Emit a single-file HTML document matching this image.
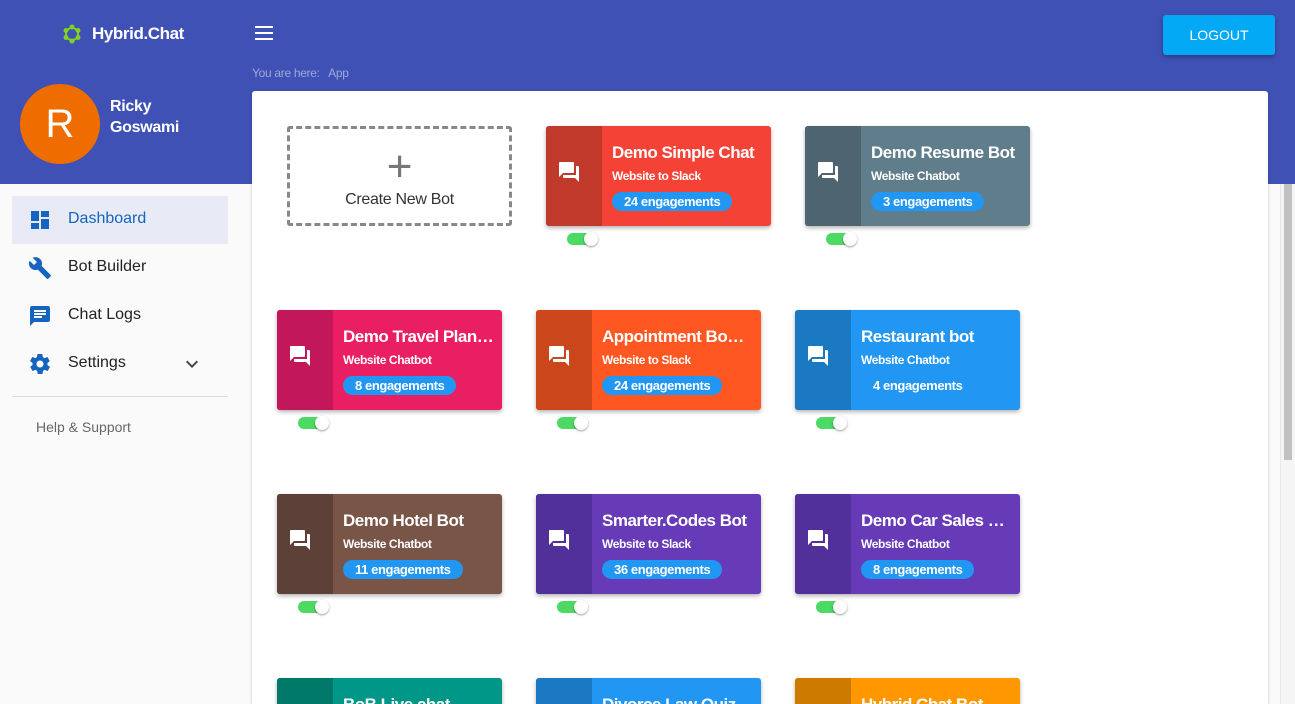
<!DOCTYPE html>
<html><head><meta charset="utf-8"><style>
*{box-sizing:border-box;margin:0;padding:0}
html,body{width:1295px;height:704px;overflow:hidden}
body{background:#fafafa;font-family:"Liberation Sans",sans-serif;position:relative}
.hdr{position:absolute;left:0;top:0;width:1295px;height:184px;background:#3f51b5}
.logo{position:absolute;left:62px;top:24px;color:#fff;font-weight:bold;font-size:17px;letter-spacing:-0.4px;display:flex;align-items:center;gap:10px}
.burger{position:absolute;left:255px;top:26px;width:18px}
.burger i{display:block;height:2px;background:#fff;margin-bottom:4px}
.crumb{position:absolute;left:252px;top:66px;font-size:12px;color:#9fa8da;letter-spacing:-0.3px}
.logout{position:absolute;left:1163px;top:15px;width:112px;height:40px;background:#03a9f4;border-radius:3px;color:#fff;font-size:14px;text-align:center;line-height:40px;box-shadow:0 2px 4px rgba(0,0,0,.3)}
.av{position:absolute;left:20px;top:84px;width:80px;height:80px;border-radius:50%;background:#ef6c00;color:#fff;font-size:40px;text-align:center;line-height:80px}
.name{position:absolute;left:110px;top:96px;color:#fff;font-weight:bold;font-size:16px;line-height:21px;letter-spacing:-0.3px}
.nav{position:absolute;left:12px;width:216px;height:48px;font-size:16px;color:#222}
.nav svg{position:absolute;left:16px;top:12px}
.nav span{position:absolute;left:56px;top:14px}
.sel{background:#e8eaf6;color:#1565c0}
.sep{position:absolute;left:12px;top:396px;width:216px;height:1px;background:#ddd}
.help{position:absolute;left:36px;top:419px;font-size:14px;color:#666}
.panel{position:absolute;left:252px;top:91px;width:1016px;height:613px;background:#fff;border-radius:3px 3px 0 0;box-shadow:0 1px 3px rgba(0,0,0,.2)}
.track{position:absolute;left:1280px;top:184px;width:15px;height:520px;background:#f5f5f5;border-left:1px solid #e8e8e8}
.sb{position:absolute;left:1284px;top:184px;width:8px;height:276px;background:#c1c1c1}
.card{position:absolute;width:225px;height:100px;border-radius:3px;box-shadow:0 2px 4px rgba(0,0,0,.3);color:#fff;overflow:hidden}
.card .st{position:absolute;left:0;top:0;width:56px;height:100%}
.card .st svg{position:absolute;left:11px;top:34px}
.card .t{position:absolute;left:66px;top:17px;font-size:17px;letter-spacing:-0.5px;font-weight:bold;white-space:nowrap;width:152px;overflow:hidden;text-overflow:ellipsis}
.card .s{position:absolute;left:66px;top:43px;font-size:12px;letter-spacing:-0.4px;font-weight:bold}
.card .b{position:absolute;left:66px;top:66px;height:19px;line-height:19px;padding:0 12px;border-radius:10px;background:#2196f3;font-size:13px;letter-spacing:-0.4px;font-weight:bold}
.tg{position:absolute;width:30px;height:12px;border-radius:6px;background:#4cd964}
.tg::after{content:"";position:absolute;right:-1px;top:-1px;width:14px;height:14px;border-radius:50%;background:#fff;box-shadow:0 1px 2px rgba(0,0,0,.4)}
.create{position:absolute;left:287px;top:126px;width:225px;height:100px;border:3px dashed #888;border-radius:3px;text-align:center;color:#333;font-size:16px;letter-spacing:-0.3px}
</style></head><body>
<div class="hdr"></div>
<div class="logo"><svg width="20" height="20" viewBox="0 0 20 20"><polygon points="10,3 16,6.5 16,13.5 10,17 4,13.5 4,6.5" fill="none" stroke="#7ed321" stroke-width="2"/><g fill="#7ed321"><circle cx="10" cy="3" r="2.5"/><circle cx="16" cy="6.5" r="2.5"/><circle cx="16" cy="13.5" r="2.5"/><circle cx="10" cy="17" r="2.5"/><circle cx="4" cy="13.5" r="2.5"/><circle cx="4" cy="6.5" r="2.5"/></g></svg>Hybrid.Chat</div>
<div class="burger"><i></i><i></i><i></i></div>
<div class="crumb">You are here:&nbsp;&nbsp; App</div>
<div class="logout">LOGOUT</div>
<div class="av">R</div>
<div class="name">Ricky<br>Goswami</div>
<div class="nav sel" style="top:196px"><svg width="24" height="24" viewBox="0 0 24 24" fill="#1565c0"><path d="M3 13h8V3H3zm0 8h8v-6H3zm10 0h8V11h-8zm0-18v6h8V3z"/></svg><span>Dashboard</span></div>
<div class="nav" style="top:244px"><svg width="24" height="24" viewBox="0 0 24 24" fill="#1565c0"><path d="M22.7 19l-9.1-9.1c.9-2.3.4-5-1.5-6.9-2-2-5-2.4-7.4-1.3L9 6 6 9 1.6 4.7C.4 7.1.9 10.1 2.9 12.1c1.9 1.9 4.6 2.4 6.9 1.5l9.1 9.1c.4.4 1 .4 1.4 0l2.3-2.3c.5-.4.5-1.1.1-1.4z"/></svg><span>Bot Builder</span></div>
<div class="nav" style="top:292px"><svg width="24" height="24" viewBox="0 0 24 24" fill="#1565c0"><path d="M20 2H4c-1.1 0-2 .9-2 2v18l4-4h14c1.1 0 2-.9 2-2V4c0-1.1-.9-2-2-2zM6 9h12v2H6zm8 5H6v-2h8zm4-6H6V6h12z"/></svg><span>Chat Logs</span></div>
<div class="nav" style="top:340px"><svg width="24" height="24" viewBox="0 0 24 24" fill="#1565c0"><path d="M19.4 13c0-.3.1-.6.1-1s0-.7-.1-1l2.1-1.6c.2-.2.2-.4.1-.6l-2-3.5c-.1-.2-.4-.3-.6-.2l-2.5 1c-.5-.4-1.1-.7-1.700-1l-.4-2.6c0-.3-.2-.5-.5-.5h-4c-.3 0-.5.2-.5.4l-.4 2.7c-.6.2-1.1.6-1.7 1l-2.5-1c-.2-.1-.5 0-.6.2l-2 3.5c-.1.2-.1.5.1.6L4.6 11c0 .3-.1.7-.1 1s0 .7.1 1l-2.1 1.6c-.2.2-.2.4-.1.6l2 3.5c.1.2.4.3.6.2l2.5-1c.5.4 1.1.7 1.7 1l.4 2.6c0 .3.2.5.5.5h4c.3 0 .5-.2.5-.4l.4-2.7c.6-.3 1.2-.6 1.7-1l2.5 1c.2.1.5 0 .6-.2l2-3.5c.1-.2.1-.5-.1-.6zM12 15.5c-1.9 0-3.5-1.6-3.5-3.5s1.6-3.5 3.5-3.5 3.5 1.6 3.5 3.5-1.6 3.5-3.5 3.5z"/></svg><span>Settings</span><svg style="left:168px" width="24" height="24" viewBox="0 0 24 24" fill="#444"><path d="M7.4 8.6L12 13.2l4.6-4.6L18 10l-6 6-6-6z"/></svg></div>
<div class="sep"></div>
<div class="help">Help &amp; Support</div>
<div class="panel"></div>
<div class="track"></div>
<div class="sb"></div>
<div class="create"><div style="font-size:44px;line-height:44px;margin-top:16px;color:#777;font-weight:300">+</div><div style="margin-top:2px">Create New Bot</div></div>
<script>
var ic='<svg width="24" height="24" viewBox="0 0 24 24" fill="#fff"><path d="M21 6h-2v9H6v2c0 .6.4 1 1 1h11l4 4V7c0-.6-.4-1-1-1zm-4 6V3c0-.6-.4-1-1-1H3c-.6 0-1 .4-1 1v14l4-4h10c.6 0 1-.4 1-1z"/></svg>';
var c=[[546,126,'#f44336','#c0392b','Demo Simple Chat','Website to Slack','24 engagements'],
[805,126,'#607d8b','#4e6571','Demo Resume Bot','Website Chatbot','3 engagements'],
[277,310,'#e91e63','#c2185b','Demo Travel Planner','Website Chatbot','8 engagements'],
[536,310,'#ff5722','#cc461b','Appointment Booking','Website to Slack','24 engagements'],
[795,310,'#2196f3','#1b78c2','Restaurant bot','Website Chatbot','4 engagements',1],
[277,494,'#795548','#5d4037','Demo Hotel Bot','Website Chatbot','11 engagements'],
[536,494,'#673ab7','#52309a','Smarter.Codes Bot','Website to Slack','36 engagements'],
[795,494,'#673ab7','#52309a','Demo Car Sales Bot','Website Chatbot','8 engagements'],
[277,678,'#009688','#00796b','BoB Live chat','',''],
[536,678,'#2196f3','#1b78c2','Divorce Law Quiz','',''],
[795,678,'#ff9800','#cc7a00','Hybrid.Chat Bot','','']];
var h='';c.forEach(function(a){h+='<div class="card" style="left:'+a[0]+'px;top:'+a[1]+'px;background:'+a[2]+'"><div class="st" style="background:'+a[3]+'">'+ic+'</div><div class="t">'+a[4]+'</div>'+(a[5]?'<div class="s">'+a[5]+'</div><div class="b"'+(a[7]?' style="background:transparent"':'')+'>'+a[6]+'</div>':'')+'</div>';if(a[5])h+='<div class="tg" style="left:'+(a[0]+21)+'px;top:'+(a[1]+107)+'px"></div>';});
document.write(h);
</script>
</body></html>
